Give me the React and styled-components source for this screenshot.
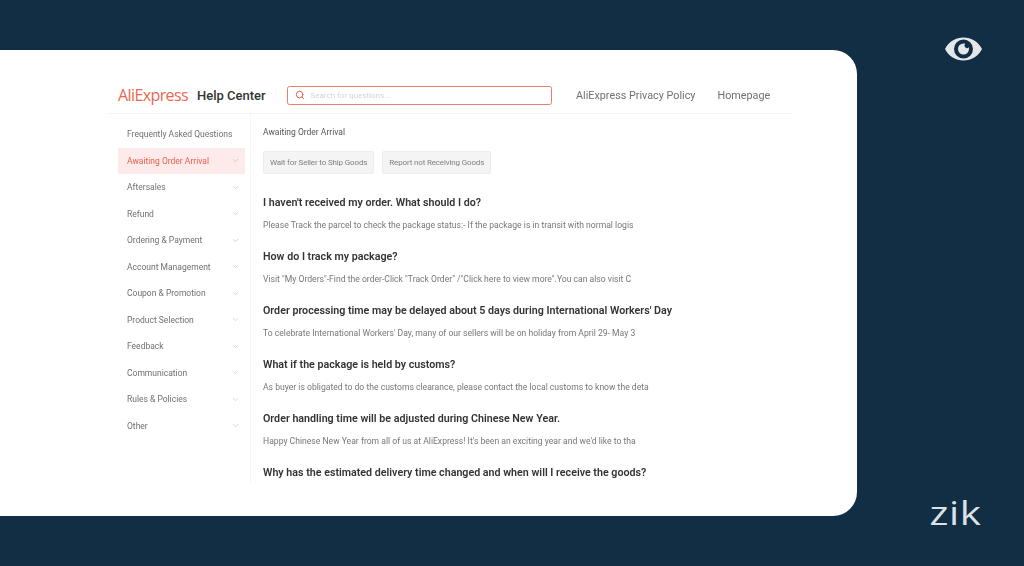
import React from 'react';
import styled, { createGlobalStyle } from 'styled-components';
import { ChevronDown, Search } from 'lucide-react';

const GlobalStyle = createGlobalStyle`
  html, body {
    margin: 0;
    padding: 0;
    height: 100%;
    overflow: hidden;
    background: #122e45;
    font-family: Roboto, "Liberation Sans", sans-serif;
  }
  * {
    box-sizing: border-box;
  }
`;

const MENU = [
  'Awaiting Order Arrival',
  'Aftersales',
  'Refund',
  'Ordering & Payment',
  'Account Management',
  'Coupon & Promotion',
  'Product Selection',
  'Feedback',
  'Communication',
  'Rules & Policies',
  'Other',
];

const QUESTIONS = [
  {
    title: "I haven't received my order. What should I do?",
    text: 'Please Track the parcel to check the package status:- If the package is in transit with normal logis',
  },
  {
    title: 'How do I track my package?',
    text: 'Visit "My Orders"-Find the order-Click "Track Order" /"Click here to view more".You can also visit C',
  },
  {
    title: "Order processing time may be delayed about 5 days during International Workers' Day",
    text: "To celebrate International Workers' Day, many of our sellers will be on holiday from April 29- May 3",
  },
  {
    title: 'What if the package is held by customs?',
    text: 'As buyer is obligated to do the customs clearance, please contact the local customs to know the deta',
  },
  {
    title: 'Order handling time will be adjusted during Chinese New Year.',
    text: "Happy Chinese New Year from all of us at AliExpress! It's been an exciting year and we'd like to tha",
  },
  {
    title: 'Why has the estimated delivery time changed and when will I receive the goods?',
  },
];

const EyeIcon = () => (
  <svg width="37" height="24" viewBox="0 0 37 24">
    <path
      fill="#e4e6e8"
      fillRule="evenodd"
      d="M0 12C4 4.500 10.500 .5 18.500 .5S33 4.500 37 12c-4 7.500-10.500 11.500-18.500 11.500S4 19.500 0 12zm18.500-9.500a9.500 9.500 0 1 0 0 19 9.500 9.500 0 0 0 0-19z"
    />
    <path
      fill="#e4e6e8"
      fillRule="evenodd"
      d="M18.500 6.500a5.500 5.500 0 1 0 5.500 5.500c0-.6-.1-1.200-.3-1.700a2.400 2.400 0 0 1-3.500-3.500c-.5-.2-1.100-.3-1.700-.3z"
    />
  </svg>
);

export default function App() {
  return (
    <Page>
      <GlobalStyle />
      <Card>
        <Header>
          <Logo>AliExpress</Logo>
          <HelpTitle>Help Center</HelpTitle>
          <SearchBox>
            <Search size={10} color="#e8694f" strokeWidth={2.4} />
            <SearchHint>Search for questions...</SearchHint>
          </SearchBox>
          <HeaderLink>AliExpress Privacy Policy</HeaderLink>
          <HeaderLink>Homepage</HeaderLink>
        </Header>
        <Body>
          <Sidebar>
            <MenuRow>
              <MenuLabel>Frequently Asked Questions</MenuLabel>
            </MenuRow>
            {MENU.map((item, i) => (
              <MenuRow key={item} $active={i === 0}>
                <MenuLabel>{item}</MenuLabel>
                <ChevronDown size={9} color="#b5b5b5" strokeWidth={1.5} />
              </MenuRow>
            ))}
          </Sidebar>
          <Main>
            <Crumb>Awaiting Order Arrival</Crumb>
            <Tabs>
              <Tab>Wait for Seller to Ship Goods</Tab>
              <Tab>Report not Receiving Goods</Tab>
            </Tabs>
            {QUESTIONS.map((q) => (
              <Question key={q.title}>
                <QuestionTitle>{q.title}</QuestionTitle>
                {q.text && <QuestionText>{q.text}</QuestionText>}
              </Question>
            ))}
          </Main>
        </Body>
      </Card>
      <Brand>
        <EyeIcon />
        <Zik>zik</Zik>
      </Brand>
    </Page>
  );
}

const Page = styled.div`
  display: flex;
  width: 1024px;
  height: 566px;
  padding-top: 50px;
  padding-bottom: 50px;
  background: #122e45;
`;

const Card = styled.div`
  display: flex;
  flex: none;
  flex-direction: column;
  width: 857px;
  height: 466px;
  padding: 27px 65px 0 108px;
  background: #ffffff;
  border-radius: 0 24px 24px 0;
  overflow: hidden;
  filter: blur(0.3px);
`;

const Header = styled.header`
  display: flex;
  flex: none;
  align-items: center;
  height: 37px;
  padding: 0 21px 0 10px;
  border-bottom: 1px solid #f3f3f3;
`;

const Logo = styled.span`
  flex: none;
  width: 79px;
  font-family: "Open Sans", sans-serif;
  font-size: 16px;
  letter-spacing: -0.6px;
  color: #e8694f;
`;

const HelpTitle = styled.span`
  flex: none;
  width: 90px;
  font-size: 13px;
  font-weight: 500;
  color: #333333;
`;

const SearchBox = styled.div`
  display: flex;
  flex: none;
  align-items: center;
  gap: 6px;
  width: 265px;
  height: 19px;
  margin-right: 24px;
  padding-left: 6.500px;
  border: 1.5px solid #e8806a;
  border-radius: 2.500px;
`;

const SearchHint = styled.span`
  font-size: 8px;
  color: #d4d4d4;
`;

const HeaderLink = styled.span`
  flex: none;
  margin-right: 22px;
  font-size: 10.800px;
  color: #707070;
  white-space: nowrap;

  &:last-child {
    margin-right: 0;
  }
`;

const Body = styled.div`
  display: flex;
  flex: 1;
  min-height: 0;
`;

const Sidebar = styled.nav`
  display: flex;
  flex-direction: column;
  width: 143px;
  margin-bottom: 33px;
  padding: 7px 5px 0 10px;
  border-right: 1px solid #f5f5f5;
`;

const MenuRow = styled.div`
  display: flex;
  flex: none;
  align-items: center;
  justify-content: space-between;
  height: 26.500px;
  padding: 0 5px 0 9px;
  background: ${(p) => (p.$active ? '#fdeaea' : 'transparent')};
  color: ${(p) => (p.$active ? '#e8604f' : '#707070')};
`;

const MenuLabel = styled.span`
  font-size: 8.500px;
  white-space: nowrap;
`;

const Main = styled.main`
  flex: 1;
  min-width: 0;
  padding: 11px 0 0 12px;
`;

const Crumb = styled.div`
  height: 14px;
  font-size: 8.500px;
  line-height: 14px;
  color: #555555;
`;

const Tabs = styled.div`
  display: flex;
  gap: 8px;
  margin-top: 12px;
  margin-bottom: 18px;
`;

const Tab = styled.div`
  display: flex;
  align-items: center;
  height: 23px;
  padding: 0 6px;
  background: #f4f4f4;
  border: 1px solid #ececec;
  border-radius: 2px;
  font-size: 8px;
  letter-spacing: -0.15px;
  color: #808080;
`;

const Question = styled.section`
  display: flex;
  flex-direction: column;
  height: 54px;
`;

const QuestionTitle = styled.h3`
  margin: 0;
  height: 22px;
  font-size: 10.700px;
  font-weight: 600;
  line-height: 22px;
  color: #333333;
  white-space: nowrap;
`;

const QuestionText = styled.p`
  margin: 0;
  margin-top: 5px;
  font-size: 8.600px;
  line-height: 12px;
  color: #777777;
  white-space: nowrap;
`;

const Brand = styled.aside`
  display: flex;
  flex: 1;
  flex-direction: column;
  align-items: flex-end;
  justify-content: space-between;
  margin: -13px 42px -15px 0;
`;

const Zik = styled.div`
  font-family: "Open Sans", sans-serif;
  font-size: 33px;
  font-weight: 500;
  line-height: 36px;
  color: #dde1e5;
  letter-spacing: 0.500px;
  transform: scaleX(1.22);
  transform-origin: right center;
`;
